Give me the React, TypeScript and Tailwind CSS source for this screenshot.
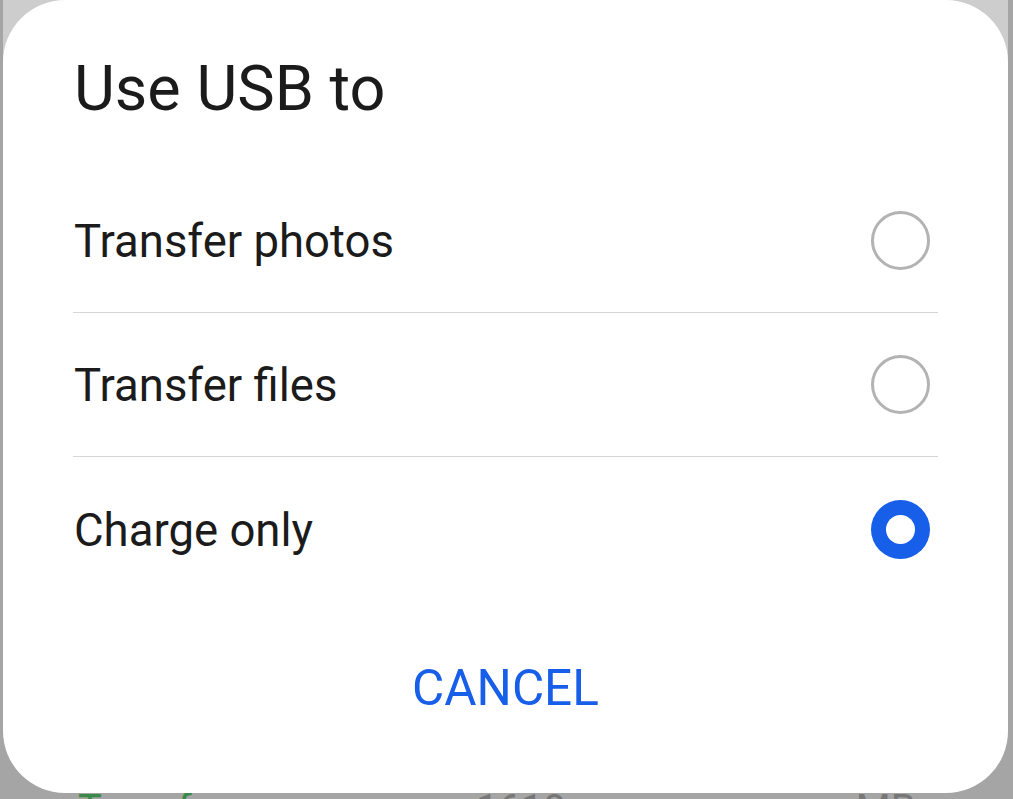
import React from "react";

const font = { fontFamily: "Roboto, 'Noto Sans', sans-serif" };

function Radio({ checked }: { checked?: boolean }) {
  if (checked) {
    return (
      <div className="w-[59px] h-[59px] rounded-full bg-[#175ee9] flex items-center justify-center">
        <div className="w-[29px] h-[29px] rounded-full bg-white" />
      </div>
    );
  }
  return <div className="w-[59px] h-[59px] rounded-full border-[3px] border-[#b3b3b3] bg-white" />;
}

export default function App() {
  const items = [
    { label: "Transfer photos", checked: false },
    { label: "Transfer files", checked: false },
    { label: "Charge only", checked: true },
  ];
  return (
    <div
      className="w-[1013px] h-[799px] bg-[#a5a5a5] pl-[3px] pr-[5px] flex flex-col overflow-hidden"
      style={font}
    >
      <div className="bg-[linear-gradient(to_bottom,#cdcdcd_0px,#cdcdcd_70px,#a5a5a5_70px)]">
        <div className="h-[793px] bg-white rounded-[62px] flex flex-col px-[70px]">
          <div className="pt-[59px] text-[63px] leading-[60px] text-[#1b1b1b] pl-[1px]">Use USB to</div>
          <div className="mt-[50px] flex flex-col">
            {items.map((it, i) => (
              <div
                key={it.label}
                className={
                  "h-[144px] flex items-center justify-between pl-[1px] pr-[8px] " +
                  (i < 2 ? "border-b border-[#d6d6d6]" : "")
                }
              >
                <span className="text-[45.5px] leading-[48px] text-[#1b1b1b] pt-[3px]">{it.label}</span>
                <Radio checked={it.checked} />
              </div>
            ))}
          </div>
          <div className="mt-[63px] flex justify-center">
            <span className="text-[49.5px] leading-[48px] text-[#175ee9]">CANCEL</span>
          </div>
        </div>
      </div>
      <div className="h-[6px] overflow-hidden flex">
        <span className="ml-[75px] mt-[-3px] text-[40px] leading-[40px] text-[#3c8a4a]">Transfer</span>
        <span className="ml-[250px] mt-[-3px] text-[40px] leading-[40px] text-[#777777]">1618</span>
        <span className="ml-[290px] mt-[-3px] text-[40px] leading-[40px] text-[#777777]">MB</span>
      </div>
    </div>
  );
}
